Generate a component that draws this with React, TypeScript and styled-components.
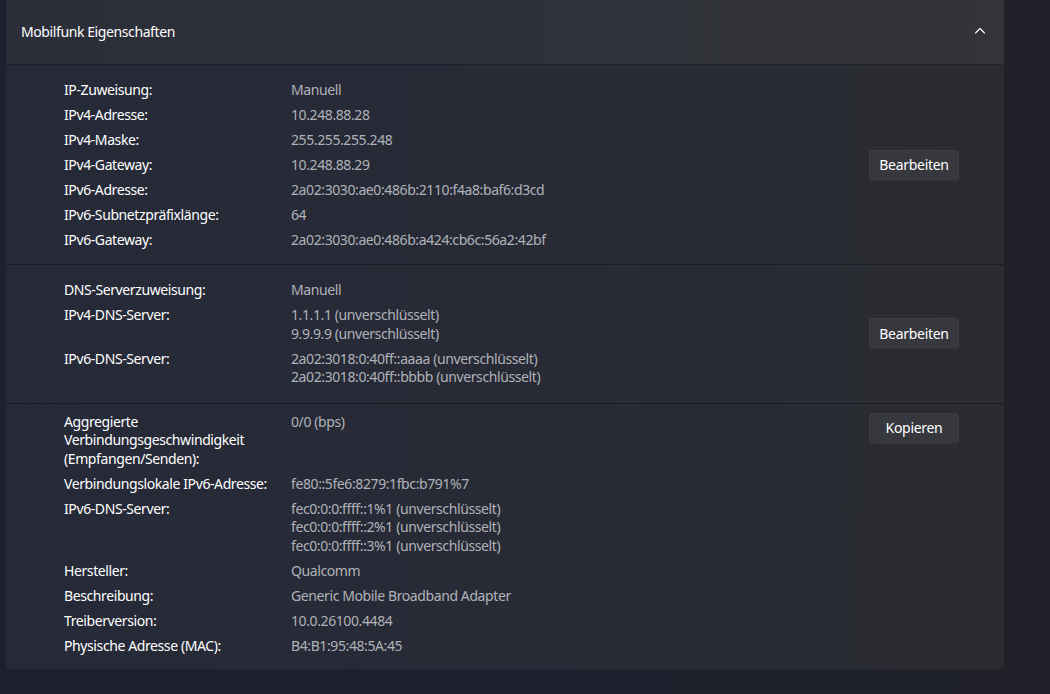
import React from "react";
import styled, { createGlobalStyle } from "styled-components";

const GlobalStyle = createGlobalStyle`
  html, body {
    margin: 0;
    padding: 0;
  }
  body {
    width: 1050px;
    height: 694px;
    overflow: hidden;
    background: linear-gradient(90deg, #1d2030 0%, #1e2130 45%, #202128 100%);
    font-family: "Noto Sans", "Open Sans", sans-serif;
    letter-spacing: -0.4px;
    -webkit-font-smoothing: antialiased;
  }
`;

const Page = styled.div`
  padding: 0 46px 0 6px;
  height: 694px;
  box-sizing: border-box;
`;

const Panel = styled.section`
  display: flex;
  flex-direction: column;
  border-radius: 0 0 5px 5px;
  overflow: hidden;
`;

const Header = styled.header`
  height: 64px;
  display: flex;
  align-items: center;
  justify-content: space-between;
  padding: 0 18px 2px 16px;
  box-sizing: border-box;
  background: linear-gradient(90deg, #2b2e38 0%, #2f3139 50%, #333439 100%);
  margin-left: -1px;
  margin-bottom: 1px;
`;

const Title = styled.h2`
  margin: 0;
  font-size: 14px;
  font-weight: 400;
  color: #ffffff;
`;

const Section = styled.div<{ $top: number; $bottom: number }>`
  display: grid;
  grid-template-columns: 1fr 90px;
  align-items: center;
  padding: ${(p) => p.$top}px 45px ${(p) => p.$bottom}px 58px;
  background: linear-gradient(90deg, #262a38 0%, #282b36 50%, #2b2c31 100%);
  & + & {
    border-top: 1px solid #1b1d26;
  }
`;

const PropList = styled.dl`
  margin: 0;
  display: grid;
  grid-template-columns: 227px 1fr;
  row-gap: 6.5px;
  font-size: 14px;
  line-height: 18.5px;
`;

const Label = styled.dt`
  color: #ffffff;
  padding-right: 4px;
`;

const Value = styled.dd`
  margin: 0;
  color: #b0b2b9;
`;

const Line = styled.div``;

const Button = styled.button<{ $align: "center" | "start" }>`
  align-self: ${(p) => p.$align};
  width: 90px;
  height: 31px;
  border-radius: 4px;
  border: 1px solid #3d3e44;
  border-bottom-color: #33343a;
  background: #37383e;
  color: #ffffff;
  font-family: inherit;
  letter-spacing: -0.3px;
  font-size: 14px;
  padding: 0 0 1px;
  cursor: default;
`;

const Chevron = () => (
  <svg width="12" height="12" viewBox="0 0 12 12" fill="none">
    <polyline
      points="1.5,8 6,3.5 10.5,8"
      stroke="#ffffff"
      strokeWidth="1.1"
      strokeLinecap="round"
      strokeLinejoin="round"
    />
  </svg>
);

type Prop = { label: string; value: string[] };

const section1: Prop[] = [
  { label: "IP-Zuweisung:", value: ["Manuell"] },
  { label: "IPv4-Adresse:", value: ["10.248.88.28"] },
  { label: "IPv4-Maske:", value: ["255.255.255.248"] },
  { label: "IPv4-Gateway:", value: ["10.248.88.29"] },
  { label: "IPv6-Adresse:", value: ["2a02:3030:ae0:486b:2110:f4a8:baf6:d3cd"] },
  { label: "IPv6-Subnetzpräfixlänge:", value: ["64"] },
  { label: "IPv6-Gateway:", value: ["2a02:3030:ae0:486b:a424:cb6c:56a2:42bf"] },
];

const section2: Prop[] = [
  { label: "DNS-Serverzuweisung:", value: ["Manuell"] },
  {
    label: "IPv4-DNS-Server:",
    value: ["1.1.1.1 (unverschlüsselt)", "9.9.9.9 (unverschlüsselt)"],
  },
  {
    label: "IPv6-DNS-Server:",
    value: [
      "2a02:3018:0:40ff::aaaa (unverschlüsselt)",
      "2a02:3018:0:40ff::bbbb (unverschlüsselt)",
    ],
  },
];

const section3: Prop[] = [
  {
    label: "Aggregierte Verbindungsgeschwindigkeit (Empfangen/Senden):",
    value: ["0/0 (bps)"],
  },
  {
    label: "Verbindungslokale IPv6-Adresse:",
    value: ["fe80::5fe6:8279:1fbc:b791%7"],
  },
  {
    label: "IPv6-DNS-Server:",
    value: [
      "fec0:0:0:ffff::1%1 (unverschlüsselt)",
      "fec0:0:0:ffff::2%1 (unverschlüsselt)",
      "fec0:0:0:ffff::3%1 (unverschlüsselt)",
    ],
  },
  { label: "Hersteller:", value: ["Qualcomm"] },
  { label: "Beschreibung:", value: ["Generic Mobile Broadband Adapter"] },
  { label: "Treiberversion:", value: ["10.0.26100.4484"] },
  { label: "Physische Adresse (MAC):", value: ["B4:B1:95:48:5A:45"] },
];

const Props = ({ items }: { items: Prop[] }) => (
  <PropList>
    {items.map((it, i) => (
      <React.Fragment key={i}>
        <Label>{it.label}</Label>
        <Value>
          {it.value.map((v, j) => (
            <Line key={j}>{v}</Line>
          ))}
        </Value>
      </React.Fragment>
    ))}
  </PropList>
);

export default function App() {
  return (
    <>
      <GlobalStyle />
      <Page>
        <Panel>
          <Header>
            <Title>Mobilfunk Eigenschaften</Title>
            <Chevron />
          </Header>
          <Section $top={16} $bottom={14.5}>
            <Props items={section1} />
            <Button $align="center">Bearbeiten</Button>
          </Section>
          <Section $top={16} $bottom={16}>
            <Props items={section2} />
            <Button $align="center">Bearbeiten</Button>
          </Section>
          <Section $top={9} $bottom={14}>
            <Props items={section3} />
            <Button $align="start">Kopieren</Button>
          </Section>
        </Panel>
      </Page>
    </>
  );
}
